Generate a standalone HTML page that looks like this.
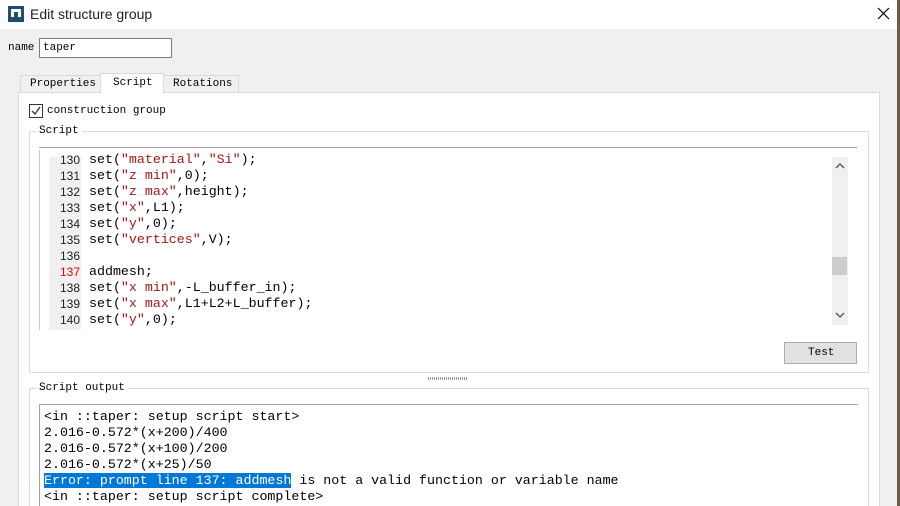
<!DOCTYPE html>
<html style="overflow:hidden;height:506px"><head><style>
body{margin:0;width:900px;height:506px;overflow:hidden;background:#f0f0f0;font-family:"Liberation Sans",sans-serif;position:relative}
.a{position:absolute}
.m{font-family:"Liberation Mono",monospace;font-size:13.3px;white-space:pre;line-height:16px}
.s{font-family:"Liberation Mono",monospace;font-size:11px;white-space:pre}
.r{color:#a31515}
</style></head><body>
<div class="a" style="left:0;top:0;width:897px;height:29px;background:#fff"></div>
<div class="a" style="left:897px;top:0;width:3px;height:506px;background:#6b5a48"></div>
<svg class="a" style="left:8px;top:6px" width="16" height="16"><rect x="0" y="0" width="16" height="16" fill="#1f4e6e"/><rect x="3" y="3" width="10" height="8" fill="#fff"/><rect x="6" y="6" width="4" height="5" fill="#1f4e6e"/></svg>
<div class="a" style="left:30px;top:6px;font-size:14px;color:#222">Edit structure group</div>
<svg class="a" style="left:877px;top:7px" width="13" height="13"><path d="M1 1L12 12M12 1L1 12" stroke="#000" stroke-width="1.2"/></svg>
<div class="a s" style="left:8px;top:42px">name</div>
<div class="a" style="left:39px;top:38px;width:131px;height:18px;background:#fff;border:1px solid #7a7a7a"></div>
<div class="a s" style="left:43px;top:42px">taper</div>
<div class="a" style="left:20px;top:75px;width:80px;height:17px;border:1px solid #d9d9d9;border-bottom:none;background:#f0f0f0"></div>
<div class="a s" style="left:30px;top:78px">Properties</div>
<div class="a" style="left:100px;top:73px;width:62px;height:20px;border:1px solid #d9d9d9;border-bottom:none;background:#fff;z-index:2"></div>
<div class="a s" style="left:113px;top:77px;z-index:3">Script</div>
<div class="a" style="left:163px;top:75px;width:74px;height:17px;border:1px solid #d9d9d9;border-bottom:none;background:#f0f0f0"></div>
<div class="a s" style="left:173px;top:78px">Rotations</div>
<div class="a" style="left:18px;top:92px;width:860px;height:414px;background:#fff;border:1px solid #d9d9d9;border-bottom:none"></div>
<div class="a" style="left:29px;top:104px;width:12px;height:12px;border:1px solid #333;background:#fff"></div>
<svg class="a" style="left:30px;top:105px" width="12" height="12"><path d="M2 6L5 9L10 2" stroke="#333" stroke-width="1.3" fill="none"/></svg>
<div class="a s" style="left:47px;top:105px">construction group</div>
<div class="a" style="left:29px;top:131px;width:838px;height:240px;border:1px solid #dcdcdc"></div>
<div class="a s" style="left:36px;top:125px;background:#fff;padding:0 3px">Script</div>
<div class="a" style="left:39px;top:147px;width:818px;height:1px;background:#a0a0a0"></div>
<div class="a" style="left:49px;top:157px;width:32px;height:173px;background:#f0f0f0"></div>
<div class="a" style="left:39px;top:150px;width:1px;height:180px;background:#ccc"></div>
<div class="a m" style="left:40px;top:152px;width:40px;text-align:right;font-family:'Liberation Sans',sans-serif;font-size:12px;color:#222">130
131
132
133
134
135
136
<span style="color:#e00">137</span>
138
139
140</div>
<div class="a m" style="left:89px;top:152px;height:178px;overflow:hidden">set(<span class="r">"material"</span>,<span class="r">"Si"</span>);
set(<span class="r">"z min"</span>,0);
set(<span class="r">"z max"</span>,height);
set(<span class="r">"x"</span>,L1);
set(<span class="r">"y"</span>,0);
set(<span class="r">"vertices"</span>,V);

addmesh;
set(<span class="r">"x min"</span>,-L_buffer_in);
set(<span class="r">"x max"</span>,L1+L2+L_buffer);
set(<span class="r">"y"</span>,0);</div>
<div class="a" style="left:832px;top:157px;width:16px;height:168px;background:#f0f0f0"></div>
<div class="a" style="left:832px;top:257px;width:15px;height:18px;background:#cdcdcd"></div>
<svg class="a" style="left:834px;top:162px" width="12" height="8"><path d="M2 6L6 2L10 6" stroke="#606060" stroke-width="1.5" fill="none"/></svg>
<svg class="a" style="left:834px;top:311px" width="12" height="8"><path d="M2 2L6 6L10 2" stroke="#606060" stroke-width="1.5" fill="none"/></svg>
<div class="a" style="left:784px;top:342px;width:71px;height:20px;background:#e1e1e1;border:1px solid #adadad"></div>
<div class="a s" style="left:808px;top:347px">Test</div>
<div class="a" style="left:428px;top:377px;width:40px;height:3px;background:repeating-linear-gradient(90deg,#999 0 1px,transparent 1px 2px)"></div>
<div class="a" style="left:29px;top:388px;width:838px;height:118px;border:1px solid #dcdcdc;border-bottom:none"></div>
<div class="a s" style="left:36px;top:382px;background:#fff;padding:0 3px">Script output</div>
<div class="a" style="left:39px;top:404px;width:818px;height:102px;border-top:1px solid #a0a0a0;border-left:1px solid #a0a0a0"></div>
<div class="a m" style="left:44px;top:409px">&lt;in ::taper: setup script start&gt;
2.016-0.572*(x+200)/400
2.016-0.572*(x+100)/200
2.016-0.572*(x+25)/50
<span style="background:#0078d7;color:#fff">Error: prompt line 137: addmesh</span> is not a valid function or variable name
&lt;in ::taper: setup script complete&gt;</div>
</body></html>
